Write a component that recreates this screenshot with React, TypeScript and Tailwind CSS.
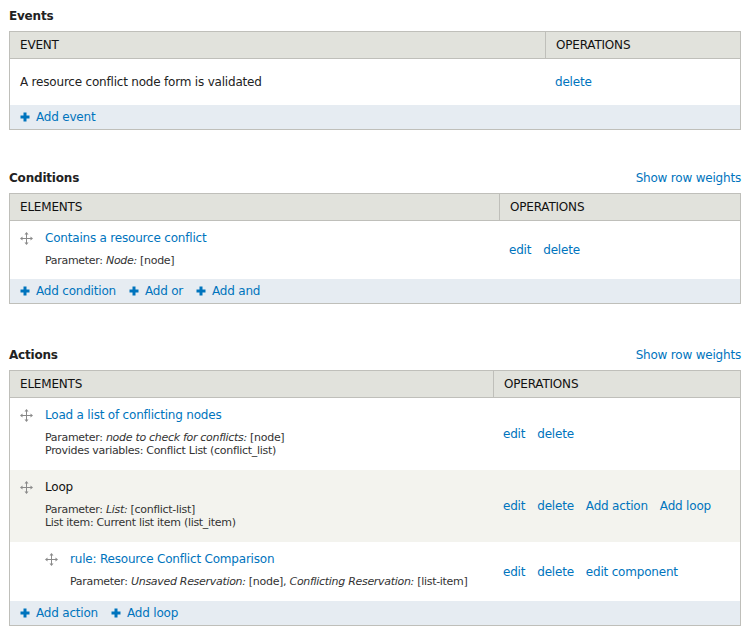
import React from "react";

const LINK = "text-[#0074bd]";

function DragHandle() {
  return (
    <svg width="13" height="13" viewBox="0 0 13 13" className="shrink-0">
      <g fill="#8a8a8a">
        <rect x="6" y="2" width="1" height="9" />
        <rect x="2" y="6" width="9" height="1" />
        <path d="M6.5 0 L8.5 2.5 L4.5 2.5 Z" />
        <path d="M6.5 13 L8.5 10.5 L4.5 10.5 Z" />
        <path d="M0 6.5 L2.5 4.5 L2.5 8.5 Z" />
        <path d="M13 6.5 L10.5 4.5 L10.5 8.5 Z" />
      </g>
    </svg>
  );
}

function Plus() {
  return (
    <svg width="10" height="10" viewBox="0 0 10 10" className="shrink-0">
      <rect x="3.5" y="0.5" width="3" height="9" fill="#0074bd" />
      <rect x="0.5" y="3.5" width="9" height="3" fill="#0074bd" />
    </svg>
  );
}

function AddLink({ label }: { label: string }) {
  return (
    <a href="#" className={`flex items-center gap-[6px] ${LINK}`}>
      <Plus />
      <span>{label}</span>
    </a>
  );
}

function Ops({ links }: { links: string[] }) {
  return (
    <div className="flex gap-[12px] whitespace-nowrap">
      {links.map((l) => (
        <a key={l} href="#" className={LINK}>
          {l}
        </a>
      ))}
    </div>
  );
}

function Header({ first, opsWidth }: { first: string; opsWidth: string }) {
  return (
    <div className="flex h-[27px] bg-[#e1e2dc] border-b border-[#bfbfba] text-[12px] text-[#111]">
      <div className="flex-1 flex items-center px-[10px]">{first}</div>
      <div className={`${opsWidth} flex items-center px-[10px] border-l border-[#bfbfba]`}>OPERATIONS</div>
    </div>
  );
}

function SectionTitle({ title, weights }: { title: string; weights?: boolean }) {
  return (
    <div className="flex items-center justify-between h-[30px]">
      <h2 className="font-bold text-[12px] text-[#222]">{title}</h2>
      {weights && (
        <a href="#" className={`${LINK} text-[12px]`}>
          Show row weights
        </a>
      )}
    </div>
  );
}

function Param({ children }: { children: React.ReactNode }) {
  return (
    <div className="text-[11px] leading-[13px] tracking-[-0.3px] text-[#333] whitespace-nowrap">{children}</div>
  );
}

// one draggable row: handle + title, parameter lines below, operations on the right
function ElementRow({
  title,
  isLink = true,
  params,
  ops,
  opsWidth,
  height,
  indent = false,
  bg = "",
}: {
  title: string;
  isLink?: boolean;
  params: React.ReactNode[];
  ops: string[];
  opsWidth: string;
  height: string;
  indent?: boolean;
  bg?: string;
}) {
  return (
    <div className={`flex ${height} ${bg}`}>
      <div className={`flex-1 ${indent ? "pl-[35px]" : "pl-[10px]"} pr-[10px] pt-[10px] flex flex-col gap-[9px]`}>
        <div className="flex items-center gap-[12px] h-[14px]">
          <DragHandle />
          {isLink ? (
            <a href="#" className={LINK}>
              {title}
            </a>
          ) : (
            <span className="text-[#111]">{title}</span>
          )}
        </div>
        <div className="pl-[25px]">
          {params.map((p, i) => (
            <Param key={i}>{p}</Param>
          ))}
        </div>
      </div>
      <div className={`${opsWidth} px-[10px] flex items-center`}>
        <Ops links={ops} />
      </div>
    </div>
  );
}

export default function App() {
  return (
    <div
      className="w-[756px] min-h-[642px] bg-white pl-[9px] pr-[15px] pt-[1px] text-[12px] tracking-[-0.2px] text-[#222]"
      style={{ fontFamily: '"DejaVu Sans", Verdana, sans-serif' }}
    >
      {/* Events */}
      <SectionTitle title="Events" />
      <div className="border border-[#bfbfba]">
        <Header first="EVENT" opsWidth="w-[195px]" />
        <div className="flex h-[46px] items-center">
          <div className="flex-1 px-[10px]">A resource conflict node form is validated</div>
          <div className="w-[195px] px-[10px]">
            <Ops links={["delete"]} />
          </div>
        </div>
        <div className="flex h-[24px] items-center gap-[13px] px-[10px] bg-[#e6ecf2]">
          <AddLink label="Add event" />
        </div>
      </div>

      {/* Conditions */}
      <div className="mt-[33px]">
        <SectionTitle title="Conditions" weights />
        <div className="border border-[#bfbfba]">
          <Header first="ELEMENTS" opsWidth="w-[241px]" />
          <ElementRow
            title="Contains a resource conflict"
            params={[
              <>
                Parameter: <i>Node:</i> [node]
              </>,
            ]}
            ops={["edit", "delete"]}
            opsWidth="w-[241px]"
            height="h-[58px]"
          />
          <div className="flex h-[24px] items-center gap-[13px] px-[10px] bg-[#e6ecf2]">
            <AddLink label="Add condition" />
            <AddLink label="Add or" />
            <AddLink label="Add and" />
          </div>
        </div>
      </div>

      {/* Actions */}
      <div className="mt-[36px]">
        <SectionTitle title="Actions" weights />
        <div className="border border-[#bfbfba]">
          <Header first="ELEMENTS" opsWidth="w-[247px]" />
          <ElementRow
            title="Load a list of conflicting nodes"
            params={[
              <>
                Parameter: <i>node to check for conflicts:</i> [node]
              </>,
              "Provides variables: Conflict List (conflict_list)",
            ]}
            ops={["edit", "delete"]}
            opsWidth="w-[247px]"
            height="h-[72px]"
          />
          <ElementRow
            title="Loop"
            isLink={false}
            params={[
              <>
                Parameter: <i>List:</i> [conflict-list]
              </>,
              "List item: Current list item (list_item)",
            ]}
            ops={["edit", "delete", "Add action", "Add loop"]}
            opsWidth="w-[247px]"
            height="h-[72px]"
            bg="bg-[#f3f3ee]"
          />
          <ElementRow
            title="rule: Resource Conflict Comparison"
            indent
            params={[
              <>
                Parameter: <i>Unsaved Reservation:</i> [node], <i>Conflicting Reservation:</i> [list-item]
              </>,
            ]}
            ops={["edit", "delete", "edit component"]}
            opsWidth="w-[247px]"
            height="h-[59px]"
          />
          <div className="flex h-[24px] items-center gap-[13px] px-[10px] bg-[#e6ecf2]">
            <AddLink label="Add action" />
            <AddLink label="Add loop" />
          </div>
        </div>
      </div>
    </div>
  );
}
